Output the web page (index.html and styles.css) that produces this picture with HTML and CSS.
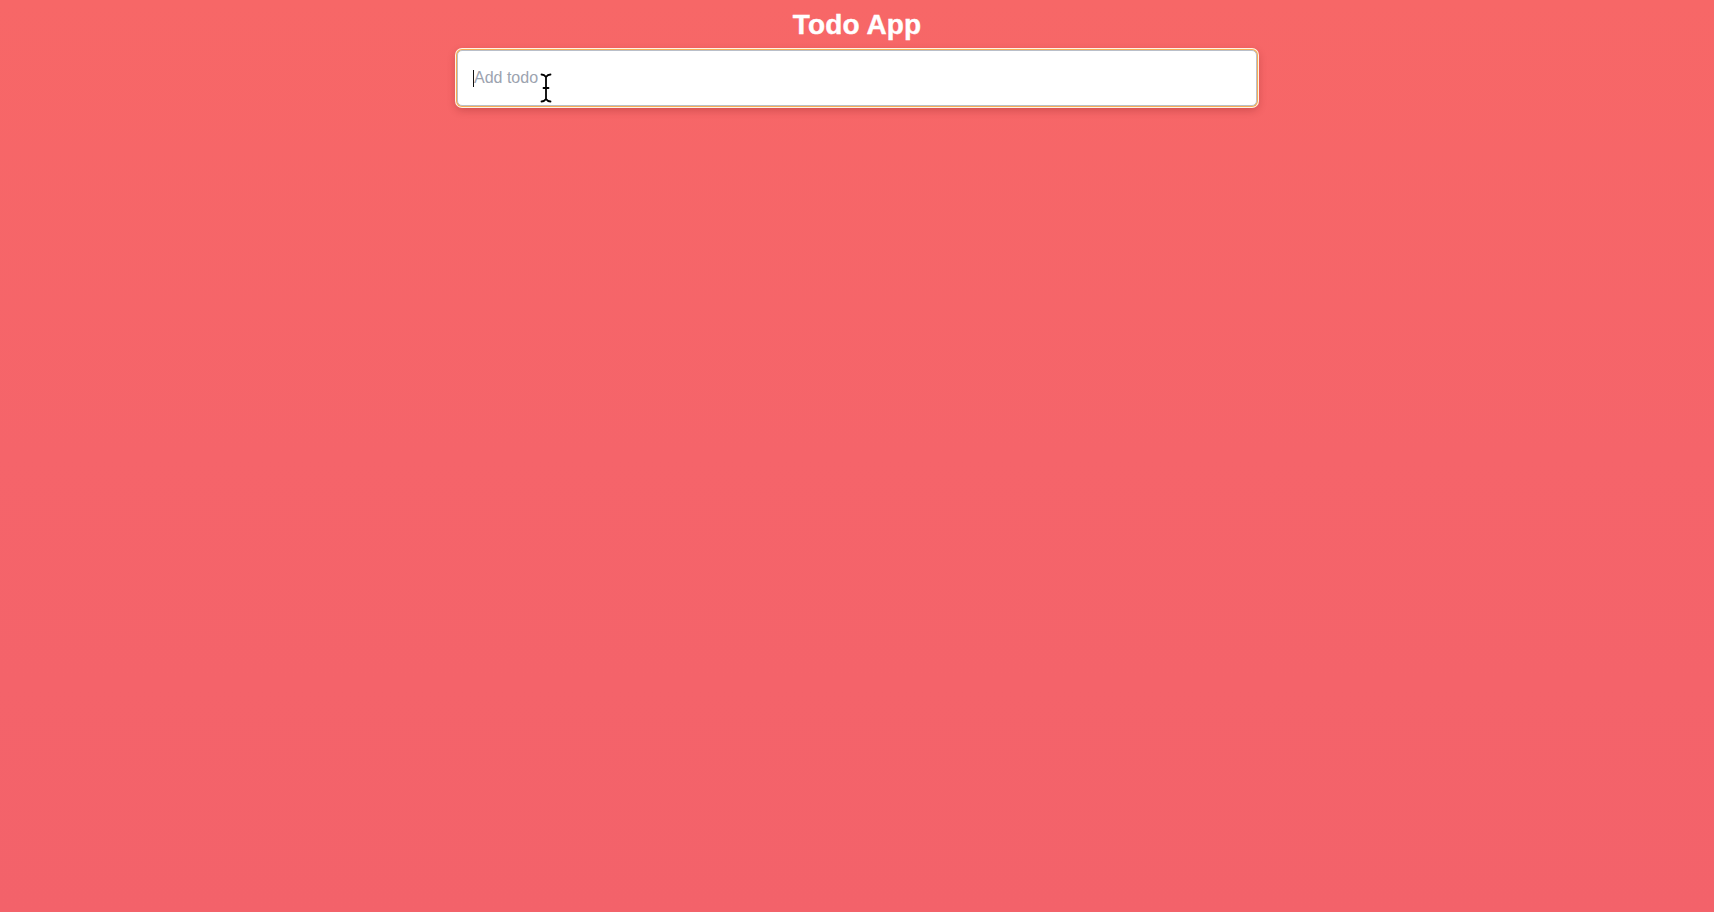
FILE: index.html
```html
<!DOCTYPE html>
<html lang="en">
<head>
<meta charset="utf-8">
<title>Todo App</title>
<link rel="stylesheet" href="styles.css">
</head>
<body>
<main class="app">
  <h1 class="title">Todo App</h1>
  <div class="field">
    <input class="todo-input" type="text" placeholder="Add todo">
    <span class="caret"></span>
    <svg class="ibeam" width="12" height="30" viewBox="0 0 12 30" aria-hidden="true">
      <path d="M1.5 1.5 C4 1.5 5 2.5 6 4 C7 2.5 8 1.5 10.5 1.5 M6 4 V26 M1.5 28.5 C4 28.5 5 27.5 6 26 C7 27.5 8 28.5 10.5 28.5 M3.5 15 H8.5" fill="none" stroke="#fff" stroke-width="3.6" stroke-linecap="round"/>
      <path d="M1.5 1.5 C4 1.5 5 2.5 6 4 C7 2.5 8 1.5 10.5 1.5 M6 4 V26 M1.5 28.5 C4 28.5 5 27.5 6 26 C7 27.5 8 28.5 10.5 28.5 M3.5 15 H8.5" fill="none" stroke="#000" stroke-width="1.8" stroke-linecap="round"/>
    </svg>
  </div>
</main>
</body>
</html>
```
FILE: styles.css
```css
html, body {
  margin: 0;
  padding: 0;
  height: 100%;
}
body {
  background: linear-gradient(to bottom, #f76767 0%, #f5646a 50%, #f3626a 100%);
  font-family: "Liberation Sans", Arial, sans-serif;
}
.app {
  display: flex;
  flex-direction: column;
  align-items: center;
  padding-top: 10px;
}
.title {
  margin: 0;
  color: #ffffff;
  font-size: 28px;
  line-height: 30px;
  font-weight: 700;
  letter-spacing: 0.1px;
  -webkit-text-stroke: 0.4px #ffffff;
}
.field {
  position: relative;
  margin-top: 10px;
  width: 800px;
}
.todo-input {
  display: block;
  box-sizing: border-box;
  width: 100%;
  height: 56px;
  margin: 0;
  padding: 0 16px;
  border: 1px solid #b9bfc9;
  border-radius: 5px;
  background: #ffffff;
  outline: none;
  font-family: "Liberation Sans", Arial, sans-serif;
  font-size: 16px;
  color: #374151;
  box-shadow: 0 0 0 1px #f6ad55, 0 0 0 2px #fff3e6, 0 3px 8px 1px rgba(110, 20, 20, 0.3);
}
.todo-input::placeholder {
  color: #9ca3af;
  opacity: 1;
}
.caret {
  position: absolute;
  left: 16px;
  top: 20px;
  width: 1px;
  height: 17px;
  background: #111;
}
.ibeam {
  position: absolute;
  left: 83px;
  top: 23px;
}
```
